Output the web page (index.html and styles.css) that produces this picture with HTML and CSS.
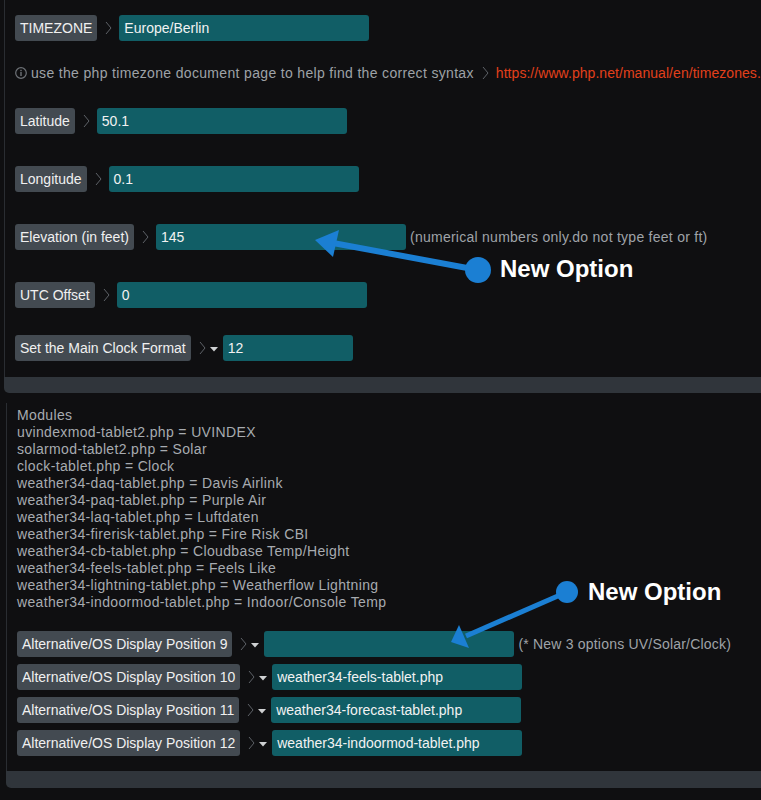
FILE: index.html
```html
<!DOCTYPE html>
<html lang="en">
<head>
<meta charset="utf-8">
<title>Settings</title>
<link rel="stylesheet" href="styles.css">
</head>
<body>
<div class="panel p1">
  <div class="panel-body">
    <div class="row">
      <span class="label">TIMEZONE</span>
      <span class="chev"><svg width="7" height="14" viewBox="0 0 7 14"><polyline points="1,1 6,7 1,13" /></svg></span>
      <span class="field">Europe/Berlin</span>
    </div>
    <div class="info">
      <svg class="info-ic" width="12" height="12" viewBox="0 0 12 12"><circle cx="6" cy="6" r="5.3" fill="none" stroke="#6e7277" stroke-width="1.2"/><rect x="5.3" y="5" width="1.4" height="4" fill="#6e7277"/><rect x="5.3" y="2.8" width="1.4" height="1.4" fill="#6e7277"/></svg>
      <span class="info-text">use the php timezone document page to help find the correct syntax</span>
      <span class="chev"><svg width="7" height="14" viewBox="0 0 7 14"><polyline points="1,1 6,7 1,13" /></svg></span>
      <span class="link">https://www.php.net/manual/en/timezones.php</span>
    </div>
    <div class="row gap-a">
      <span class="label">Latitude</span>
      <span class="chev"><svg width="7" height="14" viewBox="0 0 7 14"><polyline points="1,1 6,7 1,13" /></svg></span>
      <span class="field">50.1</span>
    </div>
    <div class="row gap-b">
      <span class="label">Longitude</span>
      <span class="chev"><svg width="7" height="14" viewBox="0 0 7 14"><polyline points="1,1 6,7 1,13" /></svg></span>
      <span class="field">0.1</span>
    </div>
    <div class="row gap-b">
      <span class="label">Elevation (in feet)</span>
      <span class="chev"><svg width="7" height="14" viewBox="0 0 7 14"><polyline points="1,1 6,7 1,13" /></svg></span>
      <span class="field">145</span>
      <span class="note">(numerical numbers only.do not type feet or ft)</span>
    </div>
    <div class="row gap-b">
      <span class="label">UTC Offset</span>
      <span class="chev"><svg width="7" height="14" viewBox="0 0 7 14"><polyline points="1,1 6,7 1,13" /></svg></span>
      <span class="field">0</span>
    </div>
    <div class="row gap-a">
      <span class="label">Set the Main Clock Format</span>
      <span class="chev sel"><svg width="7" height="14" viewBox="0 0 7 14"><polyline points="1,1 6,7 1,13" /></svg><svg class="tri" width="8" height="5" viewBox="0 0 8 5"><polygon points="0,0 8,0 4,4.5" /></svg></span>
      <span class="field short">12</span>
    </div>
  </div>
  <div class="panel-foot"></div>
</div>

<div class="panel p2">
  <div class="panel-body">
    <div class="modules">
      <div>Modules</div>
      <div>uvindexmod-tablet2.php = UVINDEX</div>
      <div>solarmod-tablet2.php = Solar</div>
      <div>clock-tablet.php = Clock</div>
      <div>weather34-daq-tablet.php = Davis Airlink</div>
      <div>weather34-paq-tablet.php = Purple Air</div>
      <div>weather34-laq-tablet.php = Luftdaten</div>
      <div>weather34-firerisk-tablet.php = Fire Risk CBI</div>
      <div>weather34-cb-tablet.php = Cloudbase Temp/Height</div>
      <div>weather34-feels-tablet.php = Feels Like</div>
      <div>weather34-lightning-tablet.php = Weatherflow Lightning</div>
      <div>weather34-indoormod-tablet.php = Indoor/Console Temp</div>
    </div>
    <div class="alt-rows">
      <div class="row">
        <span class="label">Alternative/OS Display Position 9</span>
        <span class="chev sel"><svg width="7" height="14" viewBox="0 0 7 14"><polyline points="1,1 6,7 1,13" /></svg><svg class="tri" width="8" height="5" viewBox="0 0 8 5"><polygon points="0,0 8,0 4,4.5" /></svg></span>
        <span class="field"></span>
        <span class="note n2">(* New 3 options UV/Solar/Clock)</span>
      </div>
      <div class="row">
        <span class="label">Alternative/OS Display Position 10</span>
        <span class="chev sel"><svg width="7" height="14" viewBox="0 0 7 14"><polyline points="1,1 6,7 1,13" /></svg><svg class="tri" width="8" height="5" viewBox="0 0 8 5"><polygon points="0,0 8,0 4,4.5" /></svg></span>
        <span class="field">weather34-feels-tablet.php</span>
      </div>
      <div class="row">
        <span class="label">Alternative/OS Display Position 11</span>
        <span class="chev sel"><svg width="7" height="14" viewBox="0 0 7 14"><polyline points="1,1 6,7 1,13" /></svg><svg class="tri" width="8" height="5" viewBox="0 0 8 5"><polygon points="0,0 8,0 4,4.5" /></svg></span>
        <span class="field">weather34-forecast-tablet.php</span>
      </div>
      <div class="row">
        <span class="label">Alternative/OS Display Position 12</span>
        <span class="chev sel"><svg width="7" height="14" viewBox="0 0 7 14"><polyline points="1,1 6,7 1,13" /></svg><svg class="tri" width="8" height="5" viewBox="0 0 8 5"><polygon points="0,0 8,0 4,4.5" /></svg></span>
        <span class="field">weather34-indoormod-tablet.php</span>
      </div>
    </div>
  </div>
  <div class="panel-foot"></div>
</div>

<svg class="arrows" width="761" height="800" viewBox="0 0 761 800">
  <line x1="478" y1="270" x2="333" y2="243" stroke="#1b7fd3" stroke-width="6"/>
  <polygon points="315,240 339,230 333,257" fill="#1b7fd3"/>
  <circle cx="478" cy="270" r="13" fill="#1b7fd3"/>
  <line x1="567" y1="592" x2="466" y2="636" stroke="#1b7fd3" stroke-width="5"/>
  <polygon points="451,642 459,625 469,648" fill="#1b7fd3"/>
  <circle cx="567" cy="592" r="11" fill="#1b7fd3"/>
</svg>
<div class="callout c1">New Option</div>
<div class="callout c2">New Option</div>
</body>
</html>
```

FILE: styles.css
```css
html, body {
  margin: 0;
  padding: 0;
  background: #0f0f11;
  overflow: hidden;
}
body {
  position: relative;
  width: 761px;
  height: 800px;
  font-family: "Liberation Sans", Arial, Helvetica, sans-serif;
  font-size: 14px;
  color: #eeeeee;
}
.panel {
  display: flex;
  flex-direction: column;
}
.p1 {
  margin-left: 4px;
}
.p2 {
  margin-left: 6px;
  margin-top: 10px;
}
.panel-body {
  border-left: 1px solid #2a2d32;
  padding-left: 10px;
  overflow: hidden;
}
.p1 .panel-body {
  padding-top: 15px;
  padding-bottom: 16px;
}
.p2 .panel-body {
  padding-top: 4px;
  padding-bottom: 15px;
}
.panel-foot {
  height: 16px;
  background: #30353b;
  border-radius: 0 0 0 5px;
}
.p2 .panel-foot {
  height: 17px;
}
.row {
  display: flex;
  align-items: center;
  height: 26px;
  white-space: nowrap;
}
.row > * {
  flex: none;
}
.gap-a {
  margin-top: 27px;
}
.gap-b {
  margin-top: 32px;
}
.label {
  height: 26px;
  line-height: 26px;
  padding: 0 5px;
  background: #434a51;
  border-radius: 3px;
  color: #f0f0f0;
}
.chev {
  display: flex;
  align-items: center;
  width: 22px;
  padding-left: 8px;
  box-sizing: border-box;
}
.chev.sel {
  width: 32px;
  gap: 4px;
}
.chev polyline {
  fill: none;
  stroke: #5e6268;
  stroke-width: 1;
}
.tri {
  margin-top: 2px;
}
.tri polygon {
  fill: #cfd1d3;
}
.field {
  width: 250px;
  height: 26px;
  line-height: 26px;
  padding: 0 5px;
  box-sizing: border-box;
  background: #115e66;
  border-radius: 3px;
  color: #f2f2f2;
}
.field.short {
  width: 130px;
}
.note {
  margin-left: 4px;
  color: #9fa3a8;
  letter-spacing: 0.26px;
}
.note.n2 {
  letter-spacing: 0.2px;
}
.info {
  display: flex;
  align-items: center;
  height: 17px;
  margin-top: 23px;
  white-space: nowrap;
  color: #9ea2a7;
}
.info > * {
  flex: none;
}
.info-ic {
  margin-right: 4px;
}
.info-text {
  letter-spacing: 0.33px;
}
.link {
  color: #e2401b;
  letter-spacing: 0.05px;
}
.modules {
  line-height: 17px;
  color: #a7abb0;
  letter-spacing: 0.35px;
}
.alt-rows {
  margin-top: 20px;
  display: flex;
  flex-direction: column;
  gap: 7px;
}
.arrows {
  position: absolute;
  left: 0;
  top: 0;
  pointer-events: none;
}
.callout {
  position: absolute;
  font-family: "Liberation Sans", Arial, Helvetica, sans-serif;
  font-weight: bold;
  font-size: 24px;
  line-height: 28px;
  color: #ffffff;
  white-space: nowrap;
}
.c1 {
  left: 500px;
  top: 255px;
}
.c2 {
  left: 588px;
  top: 578px;
}
```
